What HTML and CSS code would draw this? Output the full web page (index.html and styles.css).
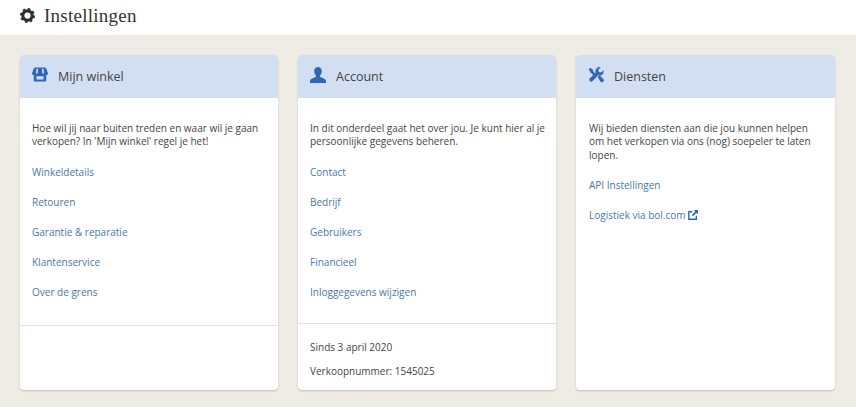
FILE: index.html
```html
<!DOCTYPE html>
<html lang="nl">
<head>
    <meta charset="UTF-8">
    <title>Instellingen</title>
    <link rel="stylesheet" href="styles.css">
</head>
<body>
    <header class="page-header">
        <svg class="gear" viewBox="0 0 24 24" width="15" height="15">
            <circle cx="12" cy="12" r="7.500" fill="none" stroke="#2f2f2f" stroke-width="5"/>
            <circle cx="12" cy="12" r="10.500" fill="none" stroke="#2f2f2f" stroke-width="3" stroke-dasharray="4.250 4"/>
        </svg>
        <h1>Instellingen</h1>
    </header>

    <main class="content">
        <section class="card">
            <div class="card-head">
                <svg class="icon" viewBox="0 0 18 16" width="16" height="15">
                    <path d="M4 0h10c1 0 1.600.5 2 1.300l2 5.200c0 1.300-.8 2-2 2.100V15a1 1 0 0 1-1 1H3a1 1 0 0 1-1-1V8.600C.8 8.500 0 7.800 0 6.500l2-5.200C2.400.5 3 0 4 0zM5.200 1.500 4.300 7h1.900l.8-5.500zM11 1.500l.8 5.500h1.900l-.9-5.500zM5 10v3.500h8V10z"/>
                </svg>
                <h2>Mijn winkel</h2>
            </div>
            <div class="card-body">
                <p>Hoe wil jij naar buiten treden en waar wil je gaan verkopen? In 'Mijn winkel' regel je het!</p>
                <ul class="links">
                    <li><a href="#">Winkeldetails</a></li>
                    <li><a href="#">Retouren</a></li>
                    <li><a href="#">Garantie &amp; reparatie</a></li>
                    <li><a href="#">Klantenservice</a></li>
                    <li><a href="#">Over de grens</a></li>
                </ul>
            </div>
            <div class="card-foot card-foot-empty"></div>
        </section>

        <section class="card">
            <div class="card-head">
                <svg class="icon" viewBox="0 0 16 16" width="16" height="16">
                    <path d="M8 0c2.300 0 3.800 1.700 3.800 4.200 0 1.700-.7 3.200-1.600 4.200-.4.500-.3 1.300.3 1.600l3.700 1.700c1.200.6 1.800 1.300 1.800 2.300V16H0v-2c0-1 .6-1.700 1.800-2.300L5.500 10c.6-.3.700-1.100.3-1.600-.9-1-1.600-2.500-1.600-4.200C4.200 1.700 5.700 0 8 0z"/>
                </svg>
                <h2>Account</h2>
            </div>
            <div class="card-body">
                <p>In dit onderdeel gaat het over jou. Je kunt hier al je persoonlijke gegevens beheren.</p>
                <ul class="links">
                    <li><a href="#">Contact</a></li>
                    <li><a href="#">Bedrijf</a></li>
                    <li><a href="#">Gebruikers</a></li>
                    <li><a href="#">Financieel</a></li>
                    <li><a href="#">Inloggegevens wijzigen</a></li>
                </ul>
            </div>
            <div class="card-foot">
                <p>Sinds 3 april 2020</p>
                <p>Verkoopnummer: 1545025</p>
            </div>
        </section>

        <section class="card card-wide">
            <div class="card-head">
                <svg class="icon" viewBox="0 0 16 16" width="16" height="16">
                    <path d="M.8 2.200 2.200.8l3 2.200v1.500l3.300 3.300-1.700 1.700-3.300-3.300H2.800z"/>
                    <path d="M15.600 3.200a4.200 4.200 0 0 1-5.400 5.100L4.600 14a1.900 1.900 0 1 1-2.700-2.700l5.700-5.600A4.200 4.200 0 0 1 12.700.3L10.300 2.700l.6 2.300 2.300.6z"/>
                    <path d="m9.700 10 1.800-1.800 4 4c.6.600.6 1.500 0 2.100l-.6.600c-.6.600-1.500.6-2.100 0z"/>
                </svg>
                <h2>Diensten</h2>
            </div>
            <div class="card-body">
                <p>Wij bieden diensten aan die jou kunnen helpen om het verkopen via ons (nog) soepeler te laten lopen.</p>
                <ul class="links">
                    <li><a href="#">API Instellingen</a></li>
                    <li>
                        <a href="#">Logistiek via bol.com</a>
                        <svg class="external" viewBox="0 0 12 12" width="10" height="10">
                            <path d="M5 2H1v9h9V7" fill="none" stroke="#2f66b5" stroke-width="1.700"/>
                            <path d="M7 0h5v5l-1.800-1.800L6 7.400 4.600 6l4.200-4.200z" fill="#2f66b5"/>
                        </svg>
                    </li>
                </ul>
            </div>
        </section>
    </main>
</body>
</html>
```

FILE: styles.css
```css
body {
    font-family: 'Open Sans', 'Liberation Sans', sans-serif;
    background-color: #ffffff;
    color: #444;
    margin: 0;
    height: 415px;
    overflow: hidden;
}
.page-header {
    display: flex;
    align-items: center;
    height: 31px;
    padding-left: 20px;
    padding-bottom: 4px;
}
.gear {
    margin-right: 9px;
}
h1 {
    font-family: 'Liberation Serif', serif;
    font-size: 19px;
    font-weight: normal;
    color: #333;
    margin: 0;
    letter-spacing: 0.25px;
}
.content {
    display: grid;
    grid-template-columns: 258px 258px 259px;
    gap: 20px;
    height: 335px;
    padding: 20px 21px 17px 20px;
    background-color: #eeece5;
}
.card {
    display: flex;
    flex-direction: column;
    background-color: #ffffff;
    border-radius: 4px;
    box-shadow: 0 1px 2px rgba(0, 0, 0, 0.2);
    overflow: hidden;
}
.card-head {
    display: flex;
    align-items: center;
    height: 43px;
    flex-shrink: 0;
    padding-left: 12px;
    background-color: #d2dff3;
}
.icon {
    fill: #2f66b5;
    margin-right: 10px;
    margin-top: -4px;
}
h2 {
    font-size: 12.500px;
    font-weight: normal;
    color: #444;
    margin: 0 0 1px;
}
.card-body {
    flex: 1;
    padding: 24px 8px 0 12px;
    font-size: 10px;
    line-height: 13.300px;
}
.card-wide .card-body {
    padding-left: 13px;
    padding-right: 20px;
}
.card-body p {
    margin: 0;
}
.links {
    list-style: none;
    margin: 8px 0 0;
    padding: 0;
}
.links li {
    height: 30px;
    line-height: 30px;
}
a {
    color: #4a76ab;
    text-decoration: none;
}
.external {
    vertical-align: -1px;
}
.card-foot {
    height: 58px;
    padding: 8px 12px 0;
    border-top: 1px solid #e2e2e2;
    font-size: 10px;
}
.card-foot p {
    margin: 0;
    height: 24px;
    line-height: 30px;
}
.card-foot-empty {
    height: 64px;
    padding: 0;
}
```
